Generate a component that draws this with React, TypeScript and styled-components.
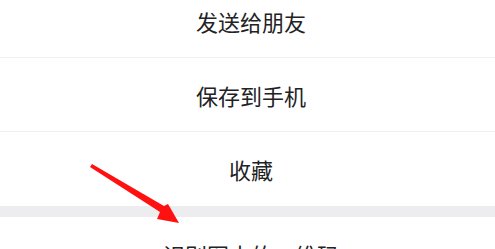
import React from 'react';
import styled, { createGlobalStyle } from 'styled-components';

const GlobalStyle = createGlobalStyle`
  html, body {
    margin: 0;
    padding: 0;
    background: #fff;
    overflow: hidden;
  }
  body {
    font-family: "Noto Sans CJK SC", "Noto Sans", sans-serif;
  }
`;

const Screen = styled.div`
  position: relative;
  width: 495px;
  height: 249px;
  overflow: hidden;
  background: #fff;
`;

const Sheet = styled.ul`
  list-style: none;
  margin: -16px 0 0;
  padding: 0;
  display: flex;
  flex-direction: column;
`;

const Item = styled.li<{ divider?: boolean; tall?: boolean }>`
  height: ${p => (p.tall ? 74 : 73)}px;
  display: flex;
  align-items: center;
  justify-content: center;
  padding-left: 7px;
  font-size: 22px;
  color: #222224;
  border-bottom: ${p => (p.divider ? '1px solid #f0f0f2' : 'none')};
`;

const Gap = styled.li`
  height: 11px;
  background: #ededef;
`;

const Arrow = styled.svg`
  position: absolute;
  left: 0;
  top: 0;
  pointer-events: none;
`;

export default function App() {
  return (
    <Screen>
      <GlobalStyle />
      <Sheet>
        <Item divider>发送给朋友</Item>
        <Item divider>保存到手机</Item>
        <Item tall>收藏</Item>
        <Gap />
        <Item>识别图中的二维码</Item>
      </Sheet>
      <Arrow width="495" height="249" viewBox="0 0 495 249">
        <polygon
          points="90,167 92,164 164,206 168,204 179,223 157,219 160,212"
          fill="#ff1111"
        />
      </Arrow>
    </Screen>
  );
}
